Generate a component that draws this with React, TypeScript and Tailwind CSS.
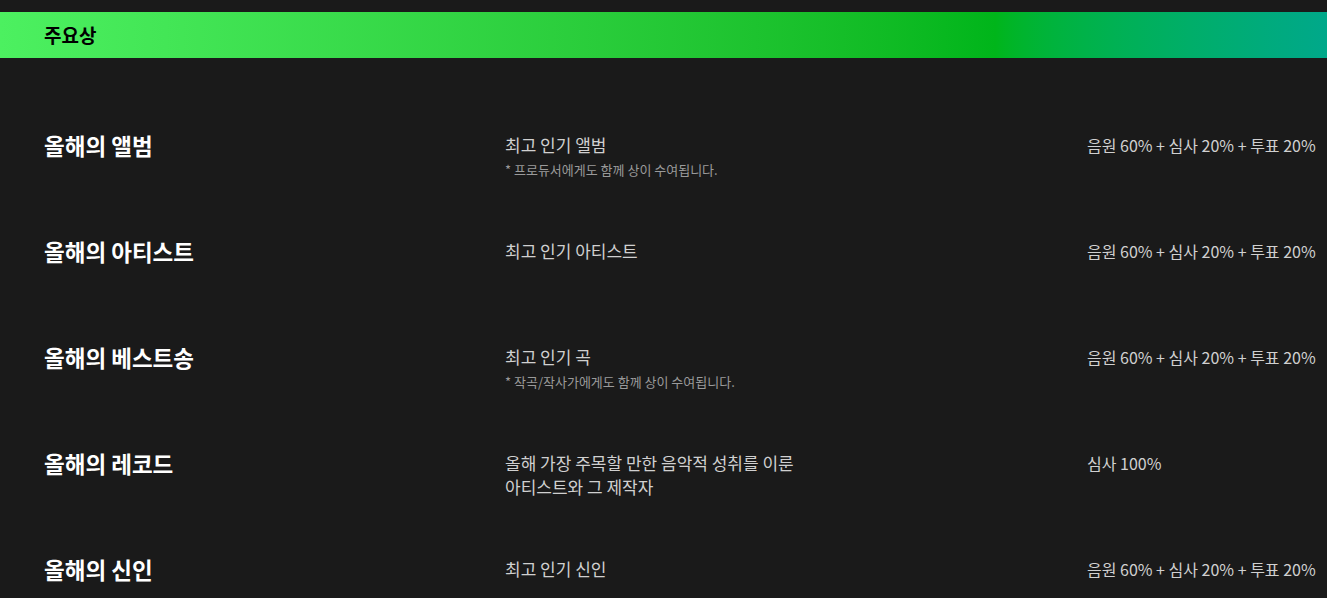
const awards = [
  {
    title: "올해의 앨범",
    desc: ["최고 인기 앨범"],
    note: "* 프로듀서에게도 함께 상이 수여됩니다.",
    score: "음원 60% + 심사 20% + 투표 20%",
  },
  {
    title: "올해의 아티스트",
    desc: ["최고 인기 아티스트"],
    score: "음원 60% + 심사 20% + 투표 20%",
  },
  {
    title: "올해의 베스트송",
    desc: ["최고 인기 곡"],
    note: "* 작곡/작사가에게도 함께 상이 수여됩니다.",
    score: "음원 60% + 심사 20% + 투표 20%",
  },
  {
    title: "올해의 레코드",
    desc: ["올해 가장 주목할 만한 음악적 성취를 이룬", "아티스트와 그 제작자"],
    score: "심사 100%",
  },
  {
    title: "올해의 신인",
    desc: ["최고 인기 신인"],
    score: "음원 60% + 심사 20% + 투표 20%",
  },
];

export default function App() {
  return (
    <div className="min-h-screen bg-[#1a1a1a] pt-3 font-['Noto_Sans_CJK_KR','Noto_Sans',sans-serif]">
      {/* Section header */}
      <div className="h-[46px] flex items-center px-[44px] bg-gradient-to-r from-[#4cf060] via-[#00b51a] via-75% to-[#00a88a]">
        <h2 className="text-[19px] font-semibold text-black">주요상</h2>
      </div>

      {/* Award list */}
      <div className="pt-[73px] pl-[44px] flex flex-col">
        {awards.map((a) => (
          <div key={a.title} className="grid grid-cols-[461px_582px_1fr] h-[106px] items-start">
            <h3 className="text-[22.5px] leading-7 font-bold text-white">{a.title}</h3>
            <div className="pt-[2px]">
              <p className="text-[17px] leading-6 text-[#d0d0d0]">
                {a.desc.map((line) => (
                  <span key={line} className="block">{line}</span>
                ))}
              </p>
              {a.note && (
                <p className="mt-[5px] text-[13px] leading-4 text-[#9a9a9a]">{a.note}</p>
              )}
            </div>
            <p className="pt-[2px] text-[16px] leading-6 text-[#d0d0d0] whitespace-nowrap">{a.score}</p>
          </div>
        ))}
      </div>
    </div>
  );
}
